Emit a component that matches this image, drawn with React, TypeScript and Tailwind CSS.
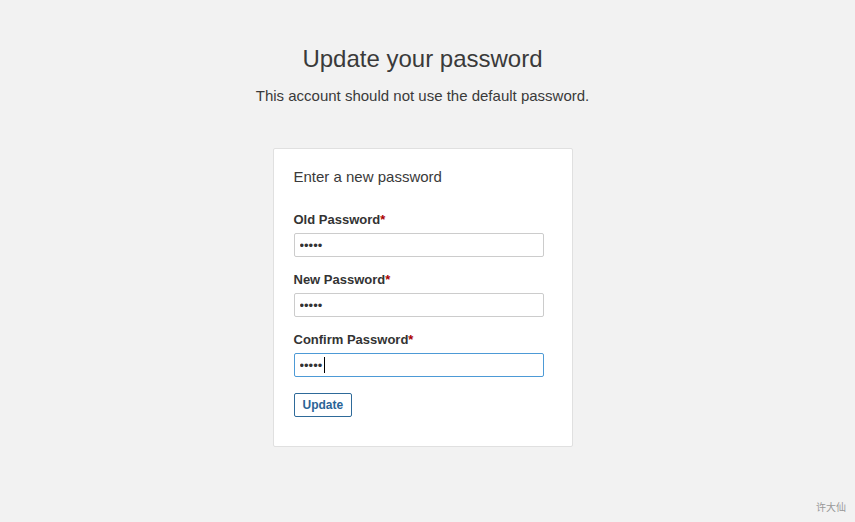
import React from 'react';

const font = { fontFamily: '"Liberation Sans", Arial, sans-serif' };

type FieldProps = {
  label: string;
  focused?: boolean;
};

function Field({ label, focused }: FieldProps) {
  return (
    <div className="flex flex-col">
      <label className="text-[13px] font-bold leading-[16px] text-[#333]">
        {label}
        <span className="text-[#a00]">*</span>
      </label>
      <div className="relative mt-[5px] w-[250px]">
        <input
          type="password"
          readOnly
          defaultValue="12345"
          className={
            focused
              ? 'block h-[24px] w-full rounded-[2px] border border-[#4d9ad6] bg-white px-[5px] text-[13px] text-[#333] outline-none'
              : 'block h-[24px] w-full rounded-[2px] border border-[#ccc] bg-white px-[5px] text-[13px] text-[#333] outline-none'
          }
        />
        {focused && <span className="absolute left-[30px] top-[4px] h-[16px] w-px bg-black" />}
      </div>
    </div>
  );
}

export default function App() {
  return (
    <div className="relative flex min-h-screen flex-col items-center bg-[#f2f2f2] pr-[10px] pt-[44px]" style={font}>
      <h1 className="text-[24px] leading-[29px] text-[#3a3a3a]">Update your password</h1>
      <p className="mt-[13px] text-[15px] leading-[20px] text-[#3a3a3a]">
        This account should not use the default password.
      </p>

      <div className="mt-[42px] w-[300px] rounded-[2px] border border-[#e0e0e0] bg-white px-[20px] pb-[29px] pt-[18px]">
        <h2 className="text-[15px] leading-[20px] text-[#3a3a3a]">Enter a new password</h2>
        <div className="mt-[25px] flex flex-col gap-[15px]">
          <Field label="Old Password" />
          <Field label="New Password" />
          <Field label="Confirm Password" focused />
        </div>
        <button className="mt-[16px] block h-[24px] rounded-[2px] border border-[#2e6a99] bg-white px-[8px] text-[12px] font-bold text-[#2a6496]">
          Update
        </button>
      </div>

      <span className="absolute bottom-[8px] right-[9px] text-[10px] text-[#999]" style={{ fontFamily: '"Noto Sans CJK SC", sans-serif' }}>
        许大仙
      </span>
    </div>
  );
}
